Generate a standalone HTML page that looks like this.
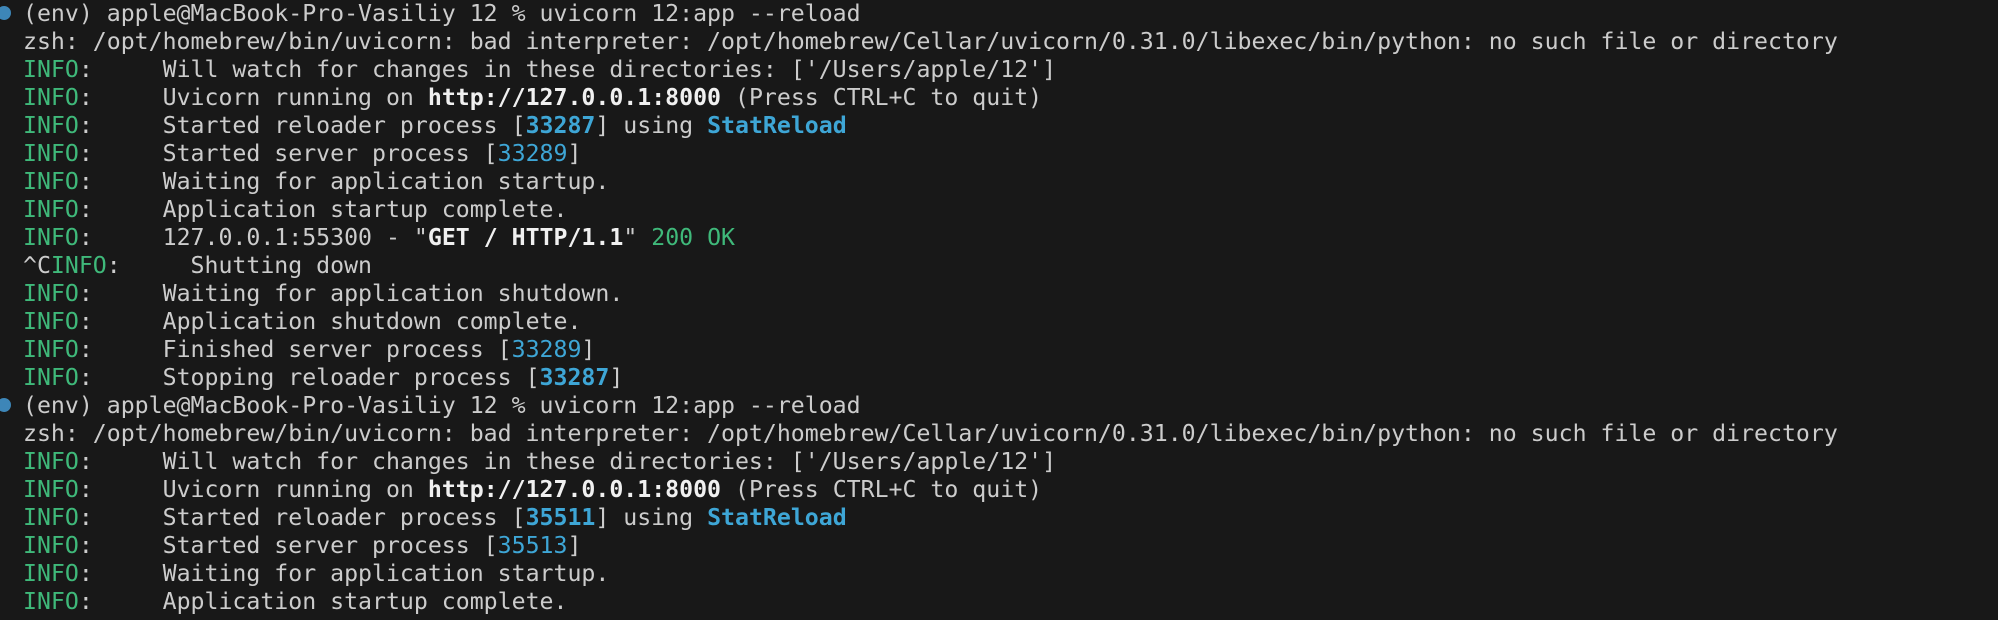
<!DOCTYPE html>
<html><head><meta charset="utf-8"><style>
html,body{margin:0;padding:0;background:#181818;width:1998px;height:620px;overflow:hidden}
pre{margin:0;position:absolute;left:23px;top:0;font-family:"DejaVu Sans Mono","Liberation Mono",monospace;font-size:23.2px;line-height:28px;color:#cccccc;white-space:pre}
.g{color:#3fb97a}.b{color:#3ea6d6}.bb{color:#3ea6d6;font-weight:bold}.w{color:#f0f0f0;font-weight:bold}
.dot{position:absolute;left:-3px;width:14px;height:14px;border-radius:50%;background:#3d86b8}
</style></head><body>
<div class="dot" style="top:6px"></div>
<div class="dot" style="top:398px"></div>
<pre>(env) apple@MacBook-Pro-Vasiliy 12 % uvicorn 12:app --reload
zsh: /opt/homebrew/bin/uvicorn: bad interpreter: /opt/homebrew/Cellar/uvicorn/0.31.0/libexec/bin/python: no such file or directory
<span class="g">INFO</span>:     Will watch for changes in these directories: ['/Users/apple/12']
<span class="g">INFO</span>:     Uvicorn running on <span class="w">http://127.0.0.1:8000</span> (Press CTRL+C to quit)
<span class="g">INFO</span>:     Started reloader process [<span class="bb">33287</span>] using <span class="bb">StatReload</span>
<span class="g">INFO</span>:     Started server process [<span class="b">33289</span>]
<span class="g">INFO</span>:     Waiting for application startup.
<span class="g">INFO</span>:     Application startup complete.
<span class="g">INFO</span>:     127.0.0.1:55300 - "<span class="w">GET / HTTP/1.1</span>" <span class="g">200 OK</span>
^C<span class="g">INFO</span>:     Shutting down
<span class="g">INFO</span>:     Waiting for application shutdown.
<span class="g">INFO</span>:     Application shutdown complete.
<span class="g">INFO</span>:     Finished server process [<span class="b">33289</span>]
<span class="g">INFO</span>:     Stopping reloader process [<span class="bb">33287</span>]
(env) apple@MacBook-Pro-Vasiliy 12 % uvicorn 12:app --reload
zsh: /opt/homebrew/bin/uvicorn: bad interpreter: /opt/homebrew/Cellar/uvicorn/0.31.0/libexec/bin/python: no such file or directory
<span class="g">INFO</span>:     Will watch for changes in these directories: ['/Users/apple/12']
<span class="g">INFO</span>:     Uvicorn running on <span class="w">http://127.0.0.1:8000</span> (Press CTRL+C to quit)
<span class="g">INFO</span>:     Started reloader process [<span class="bb">35511</span>] using <span class="bb">StatReload</span>
<span class="g">INFO</span>:     Started server process [<span class="b">35513</span>]
<span class="g">INFO</span>:     Waiting for application startup.
<span class="g">INFO</span>:     Application startup complete.</pre>
</body></html>
